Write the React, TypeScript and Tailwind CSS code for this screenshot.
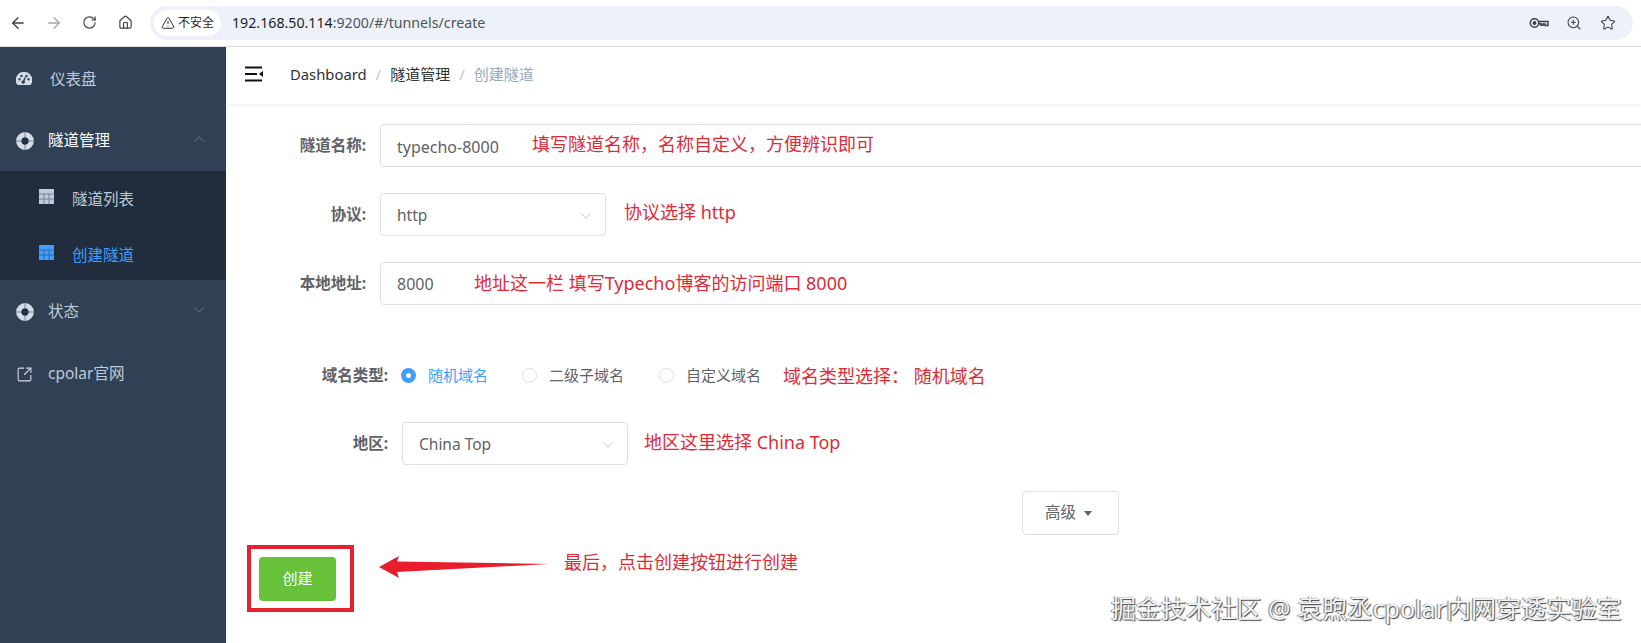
import React from "react";
import { ArrowLeft, ArrowRight, ChevronDown, ChevronUp, Home, RotateCw, SquareArrowOutUpRight, Star, TriangleAlert, ZoomIn } from "lucide-react";

const cjk = "font-['Noto_Sans','Noto_Sans_CJK_SC',sans-serif]";

function Gauge() {
  return (
    <svg width="16" height="14" viewBox="0 0 16 14">
      <path
        fill="currentColor"
        fillRule="evenodd"
        d="M8 0a8 8 0 0 1 6.8 12.6 1 1 0 0 1-.8.4H2a1 1 0 0 1-.8-.4A8 8 0 0 1 8 0ZM3.5 6a1.2 1.2 0 1 0 0 2.4 1.2 1.2 0 0 0 0-2.4Zm2-3.2a1.2 1.2 0 1 0 0 2.4 1.2 1.2 0 0 0 0-2.4Zm5 0a1.2 1.2 0 1 0 0 2.4 1.2 1.2 0 0 0 0-2.4Zm2 3.2a1.2 1.2 0 1 0 0 2.4 1.2 1.2 0 0 0 0-2.4ZM9.3 4.3 7 8.4a1.7 1.7 0 1 0 1.6.7l1.6-4.5Z"
      />
    </svg>
  );
}

function Lifebuoy() {
  return (
    <svg width="18" height="18" viewBox="0 0 18 18">
      <circle cx="9" cy="9" r="6.2" fill="none" stroke="currentColor" strokeWidth="5.4" />
      <circle cx="9" cy="9" r="3.4" fill="#1f2d3d" />
      <path d="M9 0v18M0 9h18" stroke="#304156" strokeWidth="1" opacity="0.55" />
    </svg>
  );
}

function TableIcon() {
  return (
    <svg width="15" height="15" viewBox="0 0 15 15">
      <rect width="15" height="15" fill="currentColor" />
      <path d="M0 5h15M0 10h15M5 5v10M10 5v10" stroke="#1f2d3d" strokeWidth="1" opacity="0.45" />
    </svg>
  );
}

function Hamburger() {
  return (
    <svg width="18" height="16" viewBox="0 0 18 16">
      <path d="M0 1.5h17M0 8h12M0 14.5h17" stroke="#111" strokeWidth="2" />
      <path d="M18 5v6l-4-3z" fill="#111" />
    </svg>
  );
}

function KeyIcon() {
  return (
    <svg width="20" height="12" viewBox="0 0 20 12" fill="none" stroke="#3c4043" strokeWidth="1.5">
      <circle cx="5.5" cy="6" r="4.2" />
      <circle cx="5.5" cy="6" r="1.2" fill="#3c4043" />
      <path d="M9.7 4.5H19v4h-3V7h-2v1.2h-2V6.8H9.7" />
    </svg>
  );
}

function Note({ children, className }: { children: React.ReactNode; className?: string }) {
  return <span className={"text-[18px] leading-6 text-[#dd2b38] whitespace-nowrap " + (className ?? "")}>{children}</span>;
}

function Label({ children, width }: { children: React.ReactNode; width: string }) {
  return <label className={"shrink-0 text-right text-[15.5px] font-bold text-[#606266] " + width}>{children}</label>;
}

function Select({ value, width }: { value: string; width: string }) {
  return (
    <div className={"flex h-[43px] shrink-0 items-center justify-between rounded border border-[#dcdfe6] pl-[16px] pr-[10px] pt-[2px] text-[15.5px] text-[#606266] " + width}>
      <span>{value}</span>
      <ChevronDown size={18} strokeWidth={1.1} className="text-[#b4b8c0]" />
    </div>
  );
}

function Radio({ label, checked, width }: { label: string; checked?: boolean; width: string }) {
  return (
    <div className={"flex items-center " + width}>
      {checked ? (
        <span className="flex size-[15px] items-center justify-center rounded-full bg-[#409eff]">
          <span className="size-[5px] rounded-full bg-white" />
        </span>
      ) : (
        <span className="size-[15px] rounded-full border border-[#dcdfe6]" />
      )}
      <span className={"ml-[12px] text-[15px] " + (checked ? "text-[#409eff]" : "text-[#606266]")}>{label}</span>
    </div>
  );
}

function SideItem({ icon, label, active, right, labelClass }: { icon: React.ReactNode; label: string; active?: boolean; right?: React.ReactNode; labelClass?: string }) {
  return (
    <div className={"flex h-[62px] items-center pl-[16px] pr-[18px] pt-[2px] text-[15.5px] " + (active ? "text-white" : "text-[#bfcbd9]")}>
      <span className="flex w-[32px] shrink-0 text-[#d5dce4]">{icon}</span>
      <span className={"flex-1 " + (labelClass ?? "")}>{label}</span>
      {right}
    </div>
  );
}

function SubItem({ label, active }: { label: string; active?: boolean }) {
  return (
    <div className={"flex h-[56.5px] items-center pl-[39px] text-[15.5px] " + (active ? "text-[#409eff]" : "text-[#bfcbd9]")}>
      <span className="mr-[18px] -mt-[6px] flex">
        <TableIcon />
      </span>
      {label}
    </div>
  );
}

export default function App() {
  return (
    <div className={"relative flex h-[643px] w-[1641px] flex-col overflow-hidden bg-white " + cjk}>
      {/* browser toolbar */}
      <div className="flex h-[47px] shrink-0 items-center border-b border-[#dfe1e5] bg-white pl-[9px] pr-[8px] pb-[1px]">
        <ArrowLeft size={18} strokeWidth={1.8} className="text-[#3c4043]" />
        <ArrowRight size={18} strokeWidth={1.8} className="ml-[18px] text-[#a5a7aa]" />
        <RotateCw size={15} strokeWidth={1.8} className="ml-[19px] text-[#3c4043]" />
        <Home size={15} strokeWidth={1.8} className="ml-[21px] text-[#3c4043]" />
        <div className="ml-[17px] flex h-[34px] flex-1 items-center rounded-full bg-[#edf2fa] pl-[4px] pr-[17px]">
          <div className="flex h-[26px] w-[67px] items-center justify-center gap-[3px] rounded-full bg-white text-[12px] text-[#1f1f1f]">
            <TriangleAlert size={14} strokeWidth={1.6} />
            不安全
          </div>
          <span className="ml-[11px] flex-1 text-[14.2px] text-[#1f1f1f]">
            192.168.50.114<span className="text-[#4f5357]">:9200/#/tunnels/create</span>
          </span>
          <KeyIcon />
          <ZoomIn size={16} strokeWidth={1.6} className="ml-[17px] text-[#3c4043]" />
          <Star size={16} strokeWidth={1.6} className="ml-[18px] text-[#3c4043]" />
        </div>
      </div>

      <div className="flex min-h-0 flex-1">
        {/* sidebar */}
        <aside className="w-[226px] shrink-0 bg-[#304156]">
          <SideItem icon={<Gauge />} label="仪表盘" labelClass="mt-[2px] pl-[2px]" />
          <SideItem
            icon={<Lifebuoy />}
            label="隧道管理"
            active
            right={<ChevronUp size={18} strokeWidth={1} className="-mt-[5px] text-[#7f8ea0]" />}
          />
          <div className="h-[109px] bg-[#1f2d3d]">
            <SubItem label="隧道列表" />
            <SubItem label="创建隧道" active />
          </div>
          <SideItem
            icon={<Lifebuoy />}
            label="状态"
            right={<ChevronDown size={18} strokeWidth={1} className="-mt-[5px] text-[#7f8ea0]" />}
          />
          <SideItem icon={<SquareArrowOutUpRight size={17} strokeWidth={1.5} />} label="cpolar官网" />
        </aside>

        <main className="min-w-0 flex-1">
          {/* header */}
          <div className="flex h-[57px] items-center shadow-[0_1px_4px_rgba(0,21,41,0.08)]">
            <span className="ml-[19px] -mt-1 flex">
              <Hamburger />
            </span>
            <nav className="ml-[27px] -mt-[3px] flex items-center text-[14.8px] text-[#303133]">
              <span>Dashboard</span>
              <span className="mx-[9px] text-[#c0c4cc]">/</span>
              <span className="text-[15px]">隧道管理</span>
              <span className="mx-[9px] text-[#c0c4cc]">/</span>
              <span className="text-[15px] text-[#97a8be]">创建隧道</span>
            </nav>
          </div>

          {/* form */}
          <div className="flex flex-col pt-[20px]">
            <div className="flex items-center">
              <Label width="w-[140px]">隧道名称:</Label>
              <div className="relative ml-[14px] flex h-[43px] w-[1300px] shrink-0 items-center rounded border border-[#dcdfe6] pl-[16px] pt-[2px] text-[16px] text-[#606266]">
                typecho-8000
                <Note className="absolute left-[151px] top-[7px]">填写隧道名称，名称自定义，方便辨识即可</Note>
              </div>
            </div>
            <div className="mt-[26px] flex items-center">
              <Label width="w-[140px]">协议:</Label>
              <div className="ml-[14px]">
                <Select value="http" width="w-[226px]" />
              </div>
              <Note className="ml-[18px] -mt-[6px]">协议选择 http</Note>
            </div>
            <div className="mt-[26px] flex items-center">
              <Label width="w-[140px]">本地地址:</Label>
              <div className="relative ml-[14px] flex h-[43px] w-[1300px] shrink-0 items-center rounded border border-[#dcdfe6] pl-[16px] text-[16px] text-[#606266]">
                8000
                <Note className="absolute left-[93px] top-[8px] text-[18.2px]">地址这一栏 填写Typecho博客的访问端口 8000</Note>
              </div>
            </div>
            <div className="mt-[49px] flex h-[43px] items-center">
              <Label width="w-[162px]">域名类型:</Label>
              <div className="ml-[13px] flex items-center">
                <Radio label="随机域名" checked width="w-[121px]" />
                <Radio label="二级子域名" width="w-[137px]" />
                <Radio label="自定义域名" width="w-[124px]" />
              </div>
              <Note>域名类型选择： 随机域名</Note>
            </div>
            <div className="mt-[25px] flex items-center">
              <Label width="w-[162px]">地区:</Label>
              <div className="ml-[14px]">
                <Select value="China Top" width="w-[226px]" />
              </div>
              <Note className="ml-[16px] -mt-[4px]">地区这里选择 China Top</Note>
            </div>
            <div className="mt-[26px] flex">
              <button className="ml-[796px] flex h-[44px] w-[97px] items-center justify-center gap-[8px] rounded border border-[#dcdfe6] pr-[4px] text-[15.5px] text-[#606266]">
                高级
                <span className="mt-[1px] border-x-[4.5px] border-t-[5px] border-x-transparent border-t-[#606266]" />
              </button>
            </div>
            <div className="mt-[10px] flex items-center">
              <div className="ml-[21px] flex h-[67px] w-[107px] items-center border-[4px] border-[#e7202e] pl-[8px]">
                <button className="h-[44px] w-[77px] rounded bg-[#67c23a] text-[15px] text-white">创建</button>
              </div>
              <svg width="170" height="22" viewBox="0 0 170 22" className="ml-[25px] -mt-[24px]">
                <path d="M0 11 20 0l-2 5.5L170 8 18 16l2 6z" fill="#e81e2c" />
              </svg>
              <Note className="ml-[15px] -mt-[33px]">最后，点击创建按钮进行创建</Note>
            </div>
          </div>
        </main>
      </div>

      <div className="absolute left-[1111px] top-[590px] text-[25.1px] leading-9 whitespace-nowrap text-[#f4f4f4] [text-shadow:1px_1px_1px_#444,-1px_0_1px_#777]">
        掘金技术社区 @ 袁煦丞cpolar内网穿透实验室
      </div>
    </div>
  );
}
